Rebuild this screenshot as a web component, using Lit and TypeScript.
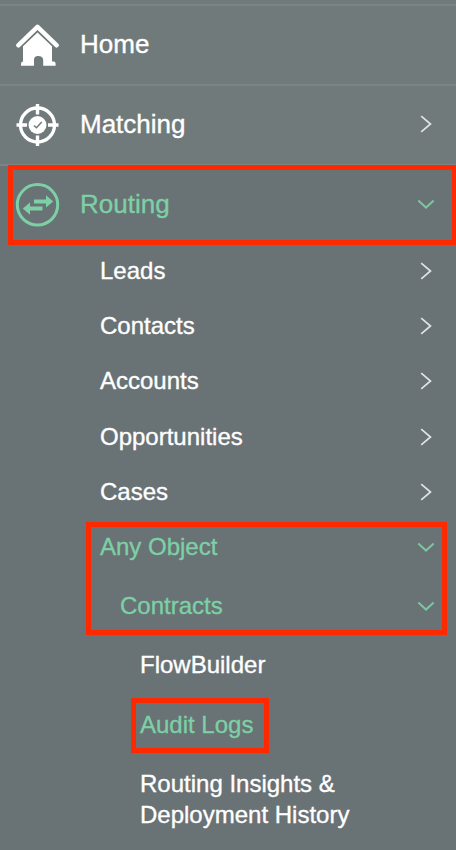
import { LitElement, html, css, svg, nothing } from "lit";
import { customElement, property } from "lit/decorators.js";
import { classMap } from "lit/directives/class-map.js";

const homeIcon = svg`
  <path d="M2.3 21.3 L21.5 2.8 L40.7 21.3" fill="none" stroke="#fff" stroke-width="4.5" stroke-linejoin="round" stroke-linecap="round"/>
  <path d="M7 22.3 L21.5 8.4 L36 22.3 V37.6 H38 Q39.6 37.8 39.6 39.8 V41.7 H27.2 V35.8 Q27 31.9 22 31.9 Q18 31.9 18 35.8 V41.7 H5 V39.8 Q5 37.8 7 37.6 Z" fill="#fff"/>
  <path d="M6.6 21.6 L21.5 7.2 L36.4 21.6" fill="none" stroke="#717a7b" stroke-width="1"/>`;

const targetIcon = svg`
  <g fill="none" stroke="#fff">
    <circle cx="21.5" cy="21" r="17" stroke-width="3.3"/>
    <path d="M21.5 0 V10.5 M21.5 31.5 V42 M.5 21 H11 M32 21 H42.5" stroke-width="3.4"/>
  </g>
  <circle cx="21.5" cy="21" r="9" fill="#fff"/>
  <path d="M18 21.5 L20.5 23.8 L25.7 18" fill="none" stroke="#717a7b" stroke-width="1.5"/>`;

const routingIcon = svg`
  <circle cx="21.5" cy="21.8" r="20.2" fill="none" stroke="#7dd0a6" stroke-width="3"/>
  <path fill="#7dd0a6" d="M18 16.6 H30 V12.3 L37.2 18.5 L30 24.5 V20.6 H18 Z M26.5 23.6 H14 V19.6 L6.8 25.6 L14 31.7 V27.6 H26.5 Z"/>`;

@customElement("nav-row")
class NavRow extends LitElement {
  @property() label = "";
  @property() arrow = "";
  @property({ type: Boolean }) active = false;
  @property({ attribute: false }) icon: unknown = nothing;

  static styles = css`
    :host { display: flex; align-items: center; box-sizing: border-box; color: #fff; }
    .icon { width: 43px; height: 43px; margin-right: 21px; flex: none; overflow: visible; }
    .label { flex: 1; white-space: pre-line; -webkit-text-stroke: 0.35px currentColor; }
    .active { color: #7dd0a6; }
    .arrow { width: 18px; height: 18px; margin-right: 21px; flex: none; fill: none; stroke: #e0e3e3; stroke-width: 1.7; }
    .arrow.active { stroke: #7dc4a1; stroke-width: 2; }
    .raised { margin-bottom: 2px; }
  `;

  render() {
    const raised = this.icon !== nothing;
    const state = classMap({ label: true, active: this.active, raised });
    const arrowState = classMap({ arrow: true, active: this.active, raised });
    return html`
      ${raised ? html`<svg class="icon" viewBox="0 0 43 43">${this.icon}</svg>` : nothing}
      <span class=${state}>${this.label}</span>
      ${this.arrow
        ? html`<svg class=${arrowState} viewBox="0 0 18 18">
            <path d=${this.arrow === "down" ? "M1.3 5.4 L9 12.6 L16.7 5.4" : "M4.2 1.2 L13.5 9 L4.2 16.8"} />
          </svg>`
        : nothing}
    `;
  }
}

@customElement("app-root")
class AppRoot extends LitElement {
  static styles = css`
    :host {
      display: block; position: relative; width: 456px; height: 850px; overflow: hidden;
      background: #697275; font-family: "Liberation Sans", Arial, sans-serif;
    }
    .top { height: 4px; background: #717a7b; }
    .main { height: 80px; padding: 0 0 0 16px; border-top: 2px solid #7b8384; background: #717a7b; font-size: 26px; line-height: 30px; }
    .open { height: 79.5px; background: #697275; }
    .sub { height: 55.2px; padding-left: 100px; font-size: 24px; line-height: 28px; }
    .deep { height: 59.3px; padding-left: 140px; font-size: 24px; line-height: 31px; }
    .group { height: 58.7px; padding-left: 120px; }
    .leaves { padding-top: 1.6px; }
    .current { height: 60.7px; }
    .last { height: 88.2px; }
    .mark { position: absolute; box-sizing: border-box; border: 5px solid #ff2900; pointer-events: none; }
    .mark-routing { left: 8px; top: 165px; width: 449px; height: 80px; }
    .mark-object { left: 86px; top: 522px; width: 361px; height: 113px; }
    .mark-audit { left: 131px; top: 698px; width: 138px; height: 55px; }
  `;

  render() {
    return html`
      <nav>
        <div class="top"></div>
        <nav-row class="main" label="Home" .icon=${homeIcon}></nav-row>
        <nav-row class="main" label="Matching" arrow="right" .icon=${targetIcon}></nav-row>
        <nav-row class="main open" label="Routing" arrow="down" active .icon=${routingIcon}></nav-row>
        ${["Leads", "Contacts", "Accounts", "Opportunities", "Cases"].map(
          (name) => html`<nav-row class="sub" label=${name} arrow="right"></nav-row>`
        )}
        <nav-row class="sub" label="Any Object" arrow="down" active></nav-row>
        <div class="leaves">
          <nav-row class="deep group" label="Contracts" arrow="down" active></nav-row>
          <nav-row class="deep" label="FlowBuilder"></nav-row>
          <nav-row class="deep current" label="Audit Logs" active></nav-row>
          <nav-row class="deep last" .label=${"Routing Insights &\nDeployment History"}></nav-row>
        </div>
      </nav>
      <div class="mark mark-routing"></div>
      <div class="mark mark-object"></div>
      <div class="mark mark-audit"></div>
    `;
  }
}
